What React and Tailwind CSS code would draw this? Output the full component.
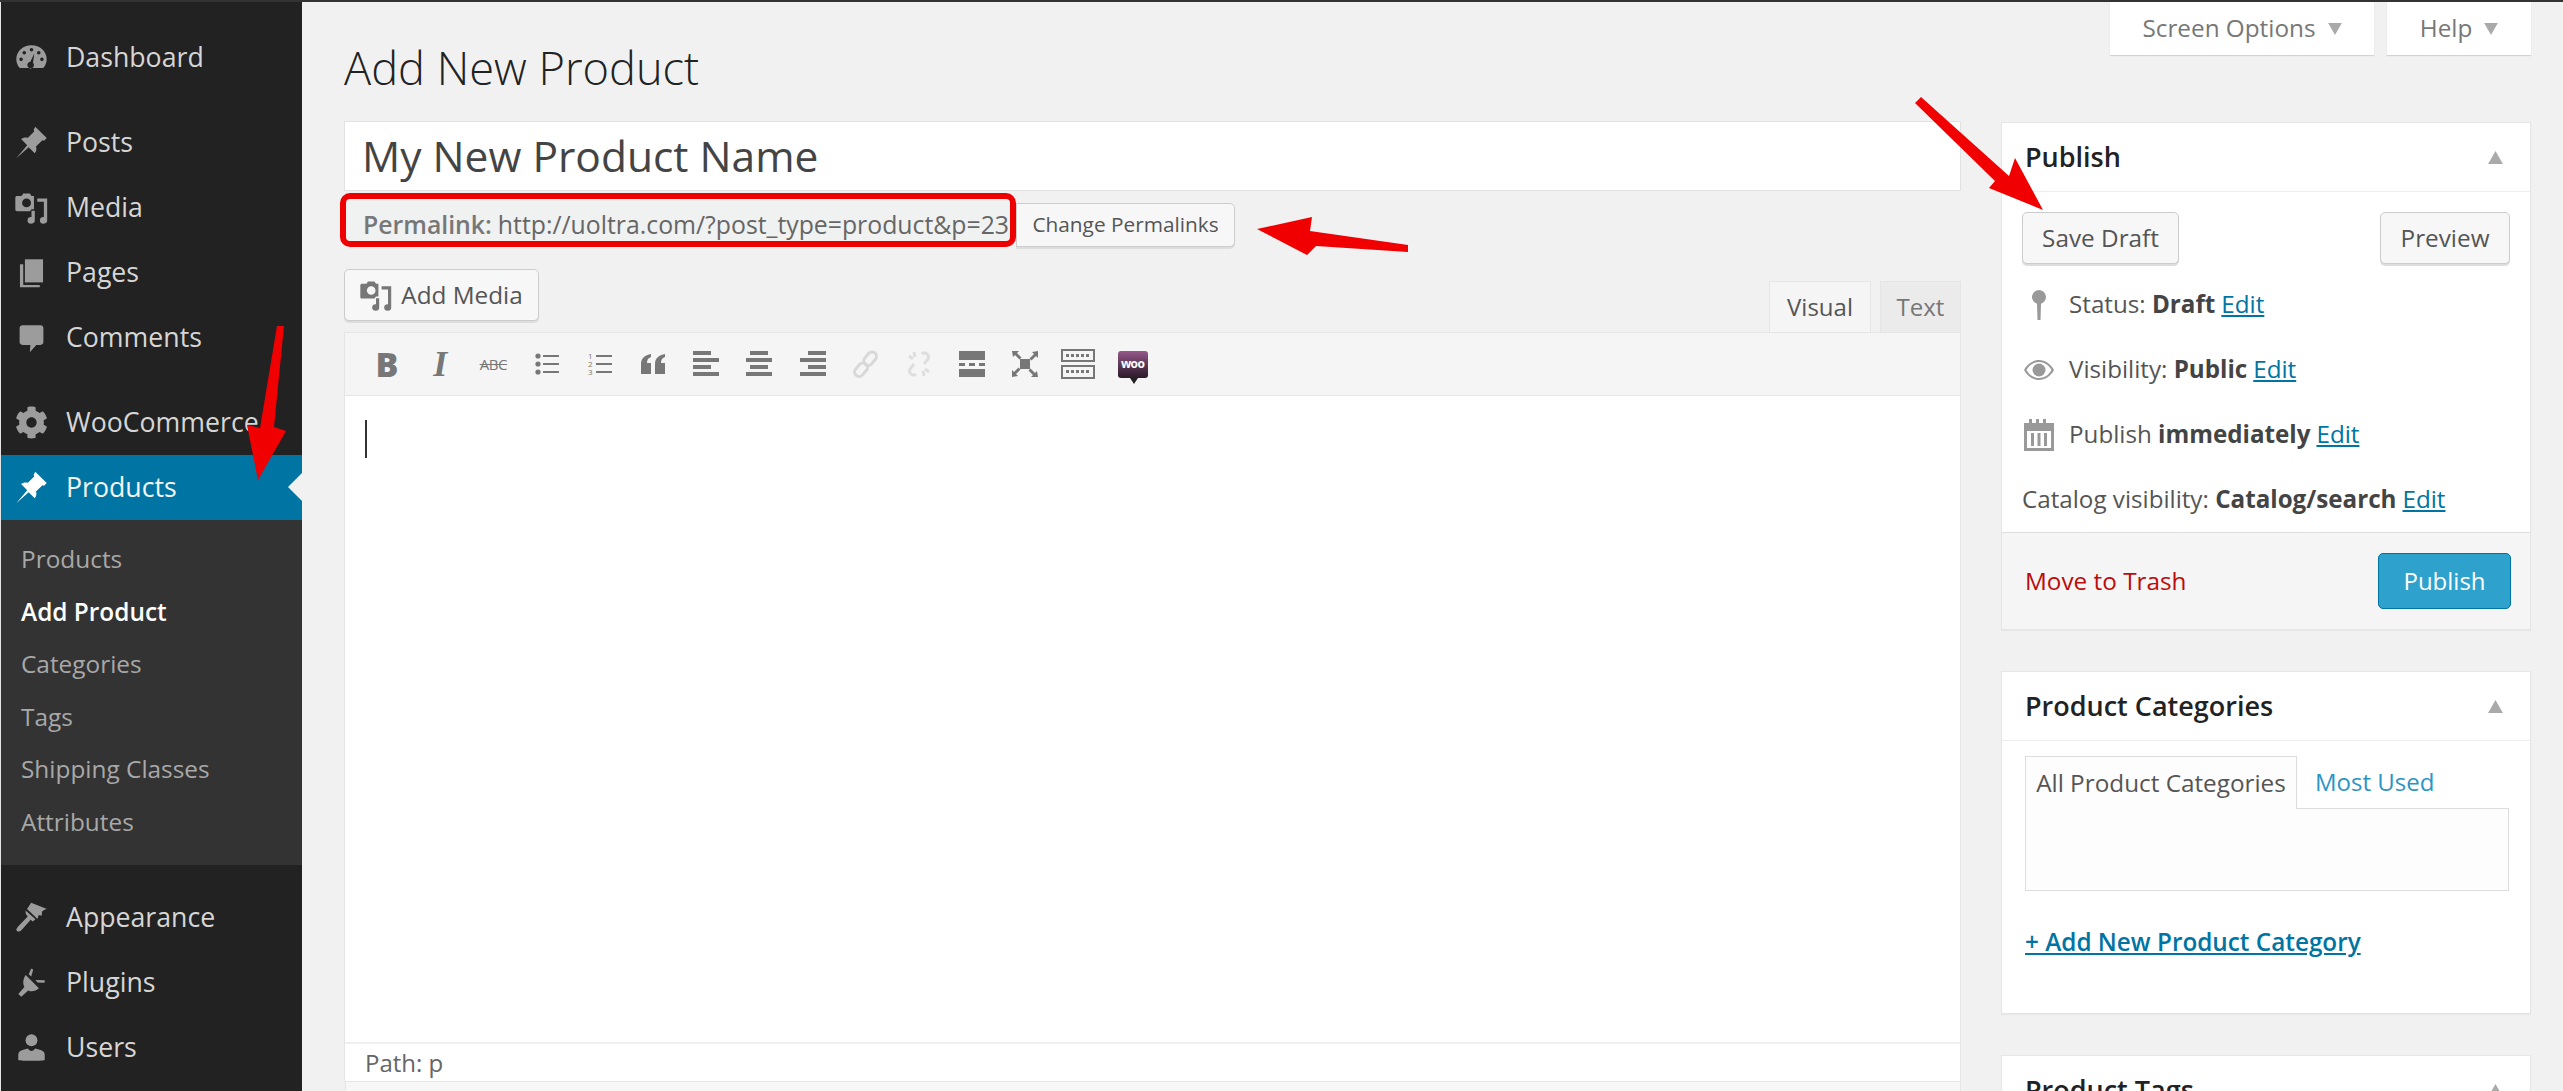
import React from 'react'
import { FaCog } from 'react-icons/fa'

const font = { fontFamily: '"Open Sans", "Noto Sans", sans-serif' }

const PinIcon = ({ className }) => (
  <svg viewBox="1.500 0.800 18 18.400" className={className} fill="currentColor">
    <path d="M12.600 1.200l6.400 6.300-1.500 1.500-.9-.3-3.600 3.500c.5 1.400.2 2.800-.7 3.800l-3.400-3.400L2 18.800l6.100-7.300-3.400-3.400c1-.9 2.400-1.200 3.800-.7l3.500-3.600-.3-.9z" />
  </svg>
)

const GaugeIcon = ({ className }) => (
  <svg viewBox="0 0 20 20" className={className} fill="currentColor">
    <path fillRule="evenodd" d="M2.900 16.400C1.600 15 .8 13 .8 11 .8 6.300 4.900 2.600 10 2.600s9.200 3.700 9.200 8.400c0 2-.8 4-2.100 5.400zM10 4.200a1.100 1.100 0 1 0 0 2.200 1.100 1.100 0 0 0 0-2.200zM5.600 6a1.100 1.100 0 1 0 0 2.200A1.100 1.100 0 0 0 5.600 6zm8.800 0a1.100 1.100 0 1 0 0 2.200 1.100 1.100 0 0 0 0-2.200zM3.700 10a1.100 1.100 0 1 0 0 2.200 1.100 1.100 0 0 0 0-2.200zm12.600 0a1.100 1.100 0 1 0 0 2.200 1.100 1.100 0 0 0 0-2.200zM11.700 7.500L9.300 12.600a2 2 0 1 0 1.600.6z" />
  </svg>
)

const MediaIcon = ({ className }) => (
  <svg viewBox="0 0 20 20" className={className} fill="currentColor">
    <path fillRule="evenodd" d="M5 1.500h4l1 1.500h1.500v8H10l-1 1.200H1.200c-.6 0-1-.4-1-1V4c0-.6.4-1 1-1H4zM7 4.500a2.700 2.700 0 1 0 0 5.400 2.700 2.700 0 0 0 0-5.400z" />
    <path d="M13.500 4.500h6v13.300a2.200 2 0 1 1-2-2V6.500h-4zM12 12v5.800a2.200 2 0 1 1-2-2V12z" />
  </svg>
)

const PagesIcon = ({ className }) => (
  <svg viewBox="0 0 20 20" className={className} fill="currentColor">
    <path d="M6 2h11v14H6z" />
    <path d="M3 5h2v12.500h10v1.500H3z" />
  </svg>
)

const CommentIcon = ({ className }) => (
  <svg viewBox="0 0 20 20" className={className} fill="currentColor">
    <path d="M4.500 2.500h11c1 0 1.700.7 1.700 1.700v8.600c0 1-.7 1.700-1.700 1.700h-2.600L9 19l.3-4.500H4.500c-1 0-1.700-.7-1.700-1.700V4.200c0-1 .7-1.700 1.700-1.700z" />
  </svg>
)

const BrushIcon = ({ className }) => (
  <svg viewBox="0 0 20 20" className={className} fill="currentColor">
    <path d="M9.800 1l9.600 3.800c-1.200.2-2.200.8-3 1.600l-.2 2.500-1.800-.4-.8 2.400L7.300 4.800z" />
    <path d="M6.400 5.700l6 5.400-1.600 1.300-1.300-1L4 17.500c-1 1-2.600 1.200-3 .5s0-1.700.9-2.600l5.800-6-1.200-1.600z" />
  </svg>
)

const PlugIcon = ({ className }) => (
  <svg viewBox="0 0 20 20" className={className} fill="currentColor">
    <path d="M6.500 5.500l8 8c-1.800 1.700-4.500 2.500-6.500 1.300L3.800 18.600 2 17l3.700-4.200C4.500 10.500 5 7.500 6.500 5.500z" />
    <path d="M9.700 1.800c.5-.5 1.500.2 1.200.9L9.800 6.400 8.300 5zM17.800 8.600c.6.300.3 1.600-.4 1.500l-3.700-.1-1.300-1.500z" />
  </svg>
)

const UserIcon = ({ className }) => (
  <svg viewBox="0 0 20 20" className={className} fill="currentColor">
    <circle cx="10" cy="5.600" r="3.600" />
    <path d="M2 17.500v-3.300c0-1.400 1.200-2.300 3-2.800l2.800-.8c.6 1 1.300 1.500 2.200 1.500s1.600-.5 2.200-1.500l2.800.8c1.800.5 3 1.400 3 2.800v3.300c-2 .8-14 .8-16 0z" />
  </svg>
)

const Tri = ({ up, className }) => (
  <svg viewBox="0 0 16 14" className={className} fill="currentColor">
    <polygon points={up ? '8,0 16,14 0,14' : '0,0 16,0 8,14'} />
  </svg>
)

const menuTop = [
  { label: 'Dashboard', Icon: GaugeIcon },
  null,
  { label: 'Posts', Icon: PinIcon },
  { label: 'Media', Icon: MediaIcon },
  { label: 'Pages', Icon: PagesIcon },
  { label: 'Comments', Icon: CommentIcon },
  null,
  { label: 'WooCommerce', Icon: FaCog },
]

const menuBottom = [
  { label: 'Appearance', Icon: BrushIcon },
  { label: 'Plugins', Icon: PlugIcon },
  { label: 'Users', Icon: UserIcon },
]

const subMenu = ['Products', 'Add Product', 'Categories', 'Tags', 'Shipping Classes', 'Attributes']

const MenuItem = ({ label, Icon }) => (
  <div className="flex items-center h-[65px] pl-[14px] text-[#d6d6d6] text-[26.700px]">
    <Icon className="w-[33px] h-[33px] text-[#9c9c9c] shrink-0" />
    <span className="ml-[18px]">{label}</span>
  </div>
)

const Sidebar = () => (
  <aside className="w-[302px] shrink-0 bg-[#222222] border-l border-[#e4e4e4] pt-[23px] overflow-hidden">
    {menuTop.map((item, i) =>
      item ? <MenuItem key={i} {...item} /> : <div key={i} className="h-[20px]" />
    )}
    <div className="relative flex items-center h-[65px] pl-[14px] bg-[#0074a2] text-[#f4f4f4] text-[26.700px]">
      <PinIcon className="w-[33px] h-[33px] text-white shrink-0" />
      <span className="ml-[18px]">Products</span>
      <div className="absolute right-0 top-[18px] border-y-[14px] border-y-transparent border-r-[14px] border-r-[#f1f1f1]" />
    </div>
    <div className="bg-[#333333] pt-[13px] pb-[16px]">
      {subMenu.map((s) => (
        <div
          key={s}
          className={`flex items-center h-[52.600px] pl-[20px] text-[24.400px] ${s === 'Add Product' ? 'text-white font-semibold' : 'text-[#a8a8a8]'}`}
        >
          {s}
        </div>
      ))}
    </div>
    <div className="h-[20px]" />
    {menuBottom.map((item) => (
      <MenuItem key={item.label} {...item} />
    ))}
  </aside>
)

const AlignIcon = ({ x }) => (
  <svg viewBox="0 0 28 28" className="w-[28px] h-[28px]" fill="currentColor">
    <rect x={x} y="1" width="18" height="4" />
    <rect x="1" y="8" width="26" height="4" />
    <rect x={x} y="15" width="18" height="4" />
    <rect x="1" y="22" width="26" height="4" />
  </svg>
)

const ListIcon = ({ numbered }) => (
  <svg viewBox="0 0 28 28" className="w-[28px] h-[28px]" fill="currentColor">
    {[6, 14, 22].map((y, i) => (
      <g key={y}>
        {numbered ? (
          <text x="2" y={y + 3} fontSize="8">{i + 1}</text>
        ) : (
          <circle cx="5" cy={y} r="2.600" />
        )}
        <rect x="10" y={y - 1} width="16" height="2" />
      </g>
    ))}
  </svg>
)

const Toolbar = () => (
  <div className="flex items-center shrink-0 h-[63px] bg-[#f5f5f5] border-b border-[#e5e5e5] pl-[28px] gap-[25.200px] text-[#777777]">
    <span className="w-[28px] text-center text-[34px] leading-none font-extrabold">B</span>
    <span className="w-[28px] text-center text-[36px] leading-none font-bold italic" style={{ fontFamily: '"Liberation Serif", serif' }}>I</span>
    <span className="w-[28px] text-center text-[15px] tracking-tight leading-none line-through">ABC</span>
    <ListIcon />
    <ListIcon numbered />
    <svg viewBox="0 0 28 28" className="w-[28px] h-[28px]" fill="currentColor">
      <path d="M12 4v3c-3 1-4 3-4 6h4v11H2V14C2 8 6 5 12 4zM26 4v3c-3 1-4 3-4 6h4v11H16V14c0-6 4-9 10-10z" />
    </svg>
    <AlignIcon x={1} />
    <AlignIcon x={5} />
    <AlignIcon x={9} />
    <svg viewBox="0 0 28 28" className="w-[28px] h-[28px] text-[#d8d8d8]" fill="none" stroke="currentColor" strokeWidth="3">
      <rect x="14" y="1" width="9" height="15" rx="4.500" transform="rotate(40 18 8)" />
      <rect x="5" y="12" width="9" height="15" rx="4.500" transform="rotate(40 9 19)" />
    </svg>
    <svg viewBox="0 0 28 28" className="w-[28px] h-[28px] text-[#dedede]" fill="none" stroke="currentColor" strokeWidth="3">
      <path d="M17 4c3-3 8 1 6 5l-4 5M11 24c-3 3-8-1-6-5l4-5M4 6l4 3M9 2l1 5M24 22l-4-3M19 26l-1-5" />
    </svg>
    <svg viewBox="0 0 28 28" className="w-[28px] h-[28px]" fill="currentColor">
      <rect x="1" y="1" width="26" height="9" />
      <rect x="1" y="13" width="6" height="3" />
      <rect x="11" y="13" width="6" height="3" />
      <rect x="21" y="13" width="6" height="3" />
      <rect x="1" y="19" width="26" height="8" />
    </svg>
    <svg viewBox="0 0 28 28" className="w-[28px] h-[28px]" fill="currentColor">
      <rect x="9" y="9" width="10" height="10" />
      <path d="M1 1h7L6 3l4.500 4.500-2 2L4 5 2 7zM27 1v7l-2-2-4.500 4.500-2-2L23 4l-2-2zM1 27v-7l2 2 4.500-4.500 2 2L5 24l2 2zM27 27h-7l2-2-4.500-4.500 2-2L24 23l2-2z" />
    </svg>
    <svg viewBox="0 0 34 30" className="w-[34px] h-[30px] -mx-[3px]" fill="currentColor">
      <path fillRule="evenodd" d="M0 0h34v13H0zm2 2v9h30V2zM0 16h34v14H0zm2 2v10h30V18z" />
      {[5, 10, 15, 20, 25].map((x) => (
        <rect key={x} x={x} y="5" width="3" height="3" />
      ))}
      {[5, 10, 15, 20, 25].map((x) => (
        <rect key={x} x={x} y="21" width="3" height="3" />
      ))}
    </svg>
    <div className="relative flex items-center justify-center w-[30px] h-[27px] rounded-[3px] bg-gradient-to-b from-[#96588a] to-[#2c1a2a] text-white text-[12px] font-bold leading-none tracking-tighter">
      woo
      <div className="absolute -bottom-[6px] left-[12px] border-x-[4px] border-x-transparent border-t-[6px] border-t-[#222222]" />
    </div>
  </div>
)

const btn = 'flex items-center justify-center rounded-[5px] border border-[#cccccc] bg-[#f7f7f7] shadow-[0_2px_0_#dddddd] text-[#555555]'

const EditorColumn = () => (
  <div className="flex flex-col w-[1617px] shrink-0">
    <h1 className="shrink-0 h-[119px] pt-[41px] text-[45.200px] leading-[50px] text-[#222222] font-light">Add New Product</h1>
    <div className="flex items-center shrink-0 h-[70px] bg-white border border-[#e2e2e2] pl-[17px] text-[42.500px] text-[#444444]">
      My New Product Name
    </div>
    <div className="flex items-end shrink-0 h-[56px] -ml-[4px]">
      <div className="flex items-center w-[676px] h-[54px] border-[6px] border-[#ee0000] rounded-[10px] pl-[17px] pt-[8px] text-[24.800px] leading-[32px] text-[#666666] whitespace-nowrap bg-[#f0f1f1]">
        <b className="font-semibold text-[#777777]">Permalink:</b>
        <span className="ml-[6px]">http://uoltra.com/?post_type=product&amp;p=23</span>
      </div>
      <button className={`${btn} w-[219px] h-[44px] text-[20.800px] rounded-l-none`}>Change Permalinks</button>
    </div>
    <div className="flex justify-between shrink-0 h-[85px] pt-[22px]">
      <button className={`${btn} w-[195px] h-[52px] gap-[9px] text-[24.300px]`}>
        <MediaIcon className="w-[32px] h-[32px] text-[#777777]" />
        Add Media
      </button>
      <div className="flex self-end text-[24px]">
        <div className="flex items-center justify-center w-[102px] h-[51px] bg-[#f5f5f5] border border-[#e5e5e5] border-b-0 text-[#555555]">Visual</div>
        <div className="flex items-center justify-center w-[81px] h-[51px] ml-[9px] bg-[#ebebeb] border border-[#e5e5e5] border-b-0 text-[#777777]">Text</div>
      </div>
    </div>
    <div className="flex flex-col shrink-0 h-[750px] border border-[#e5e5e5] bg-white">
      <Toolbar />
      <div className="flex-1 pl-[20px] pt-[24px]">
        <div className="w-[2px] h-[38px] bg-[#333333]" />
      </div>
      <div className="flex items-center h-[39px] border-t-[2px] border-[#f0f0f0] pl-[20px] text-[24px] text-[#666666]">Path: p</div>
    </div>
    <div className="flex-1 bg-[#f7f7f7] border-x border-[#e5e5e5] ml-[1px]" />
  </div>
)

const BoxHead = ({ title }) => (
  <div className="flex items-center justify-between h-[69px] border-b border-[#eeeeee] pl-[23px] pr-[27px]">
    <span className="text-[27px] font-semibold text-[#222222]">{title}</span>
    <Tri up className="w-[15px] h-[13px] text-[#aaaaaa]" />
  </div>
)

const Edit = () => <a className="ml-[6px] text-[#0074a2] underline">Edit</a>

const Row = ({ icon, children }) => (
  <div className="flex items-center h-[65px] text-[24.200px] text-[#555555] whitespace-nowrap">
    {icon && <div className="flex justify-center w-[34px] mr-[13px] text-[#999999]">{icon}</div>}
    {children}
  </div>
)

const Side = () => (
  <div className="flex flex-col w-[530px] shrink-0">
    <div className="flex justify-end shrink-0 gap-[13px] h-[120px]">
      <div className="flex items-center justify-center gap-[12px] w-[264px] h-[53px] bg-white shadow-[0_1px_1px_#00000020] text-[24.300px] text-[#777777]">
        Screen Options <Tri className="w-[14px] h-[12px] text-[#aaaaaa]" />
      </div>
      <div className="flex items-center justify-center gap-[12px] w-[144px] h-[53px] bg-white shadow-[0_1px_1px_#00000020] text-[24.300px] text-[#777777]">
        Help <Tri className="w-[14px] h-[12px] text-[#aaaaaa]" />
      </div>
    </div>
    <div className="shrink-0 bg-white border border-[#e5e5e5] shadow-[0_1px_1px_#0000000a]">
      <BoxHead title="Publish" />
      <div className="px-[20px]">
        <div className="flex justify-between pt-[20px] pb-[8px]">
          <button className={`${btn} w-[157px] h-[52px] text-[24.300px]`}>Save Draft</button>
          <button className={`${btn} w-[130px] h-[52px] text-[24.300px]`}>Preview</button>
        </div>
        <Row icon={
          <svg viewBox="0 0 14 30" className="w-[14px] h-[30px]" fill="currentColor">
            <path d="M7 0a7 7 0 0 1 2 13.700L8.500 30h-3L5 13.700A7 7 0 0 1 7 0z" />
          </svg>
        }>
          Status:&nbsp;<b className="font-bold text-[#444444]">Draft</b><Edit />
        </Row>
        <Row icon={
          <svg viewBox="0 0 30 20" className="w-[30px] h-[20px]" fill="currentColor">
            <path fillRule="evenodd" d="M15 0c6 0 12 4 15 10-3 6-9 10-15 10S3 16 0 10C3 4 9 0 15 0zm0 2C10 2 5 5 2.500 10 5 15 10 18 15 18s10-3 12.500-8C25 5 20 2 15 2z" />
            <circle cx="15" cy="10" r="6.500" />
          </svg>
        }>
          Visibility:&nbsp;<b className="font-bold text-[#444444]">Public</b><Edit />
        </Row>
        <Row icon={
          <svg viewBox="0 0 30 32" className="w-[30px] h-[32px]" fill="currentColor">
            <path fillRule="evenodd" d="M0 4h5V0h3v4h4V0h3v4h4V0h3v4h8v28H0zm3 8v17h24V12z" />
            <rect x="7" y="14" width="3" height="13" />
            <rect x="13.500" y="14" width="3" height="13" />
            <rect x="20" y="14" width="3" height="13" />
          </svg>
        }>
          Publish&nbsp;<b className="font-bold text-[#444444]">immediately</b><Edit />
        </Row>
        <Row>
          Catalog visibility:&nbsp;<b className="font-bold text-[#444444]">Catalog/search</b><Edit />
        </Row>
      </div>
      <div className="flex items-center justify-between h-[97px] bg-[#f5f5f5] border-t border-[#dddddd] pl-[23px] pr-[19px]">
        <span className="text-[24.300px] text-[#bc0b0b]">Move to Trash</span>
        <button className="flex items-center justify-center w-[133px] h-[56px] rounded-[5px] border border-[#0074a2] bg-[#2ea2cc] text-white text-[24px]">Publish</button>
      </div>
    </div>
    <div className="shrink-0 mt-[41px] h-[343px] bg-white border border-[#e5e5e5] shadow-[0_1px_1px_#0000000a]">
      <BoxHead title="Product Categories" />
      <div className="px-[23px] pt-[15px]">
        <div className="flex">
          <div className="relative z-10 flex items-center justify-center w-[272px] h-[53px] bg-[#fdfdfd] border border-[#dddddd] border-b-0 -mb-[1px] text-[24.300px] text-[#555555]">
            All Product Categories
          </div>
          <span className="ml-[18px] self-center text-[24px] text-[#2a95c5]">Most Used</span>
        </div>
        <div className="w-[484px] h-[83px] bg-[#fdfdfd] border border-[#dddddd]" />
        <div className="mt-[33px] text-[24.300px] font-semibold text-[#0074a2] underline">+ Add New Product Category</div>
      </div>
    </div>
    <div className="shrink-0 mt-[41px] h-[80px] bg-white border border-[#e5e5e5]">
      <BoxHead title="Product Tags" />
    </div>
  </div>
)

const Arrows = () => (
  <svg className="absolute inset-0 w-full h-full pointer-events-none" viewBox="0 0 2563 1091" fill="#f00000">
    <polygon points="277,326 284,326 274,427 286,431 258,480 247,425 260,428" />
    <polygon points="1257,229 1312,217 1310,231 1408,245 1408,252 1316,246 1307,255" />
    <polygon points="1915,103 1921,97 2009,176 2015,158 2043,210 1989,188 1995,181" />
  </svg>
)

export default function App() {
  return (
    <div className="relative w-[2563px] h-[1091px] overflow-hidden bg-[#f1f1f1]" style={font}>
      <div className="h-[2px] bg-[#333333]" />
      <div className="flex h-[1089px]">
        <Sidebar />
        <main className="flex gap-[40px] flex-1 pl-[42px] overflow-hidden">
          <EditorColumn />
          <Side />
        </main>
      </div>
      <Arrows />
    </div>
  )
}
